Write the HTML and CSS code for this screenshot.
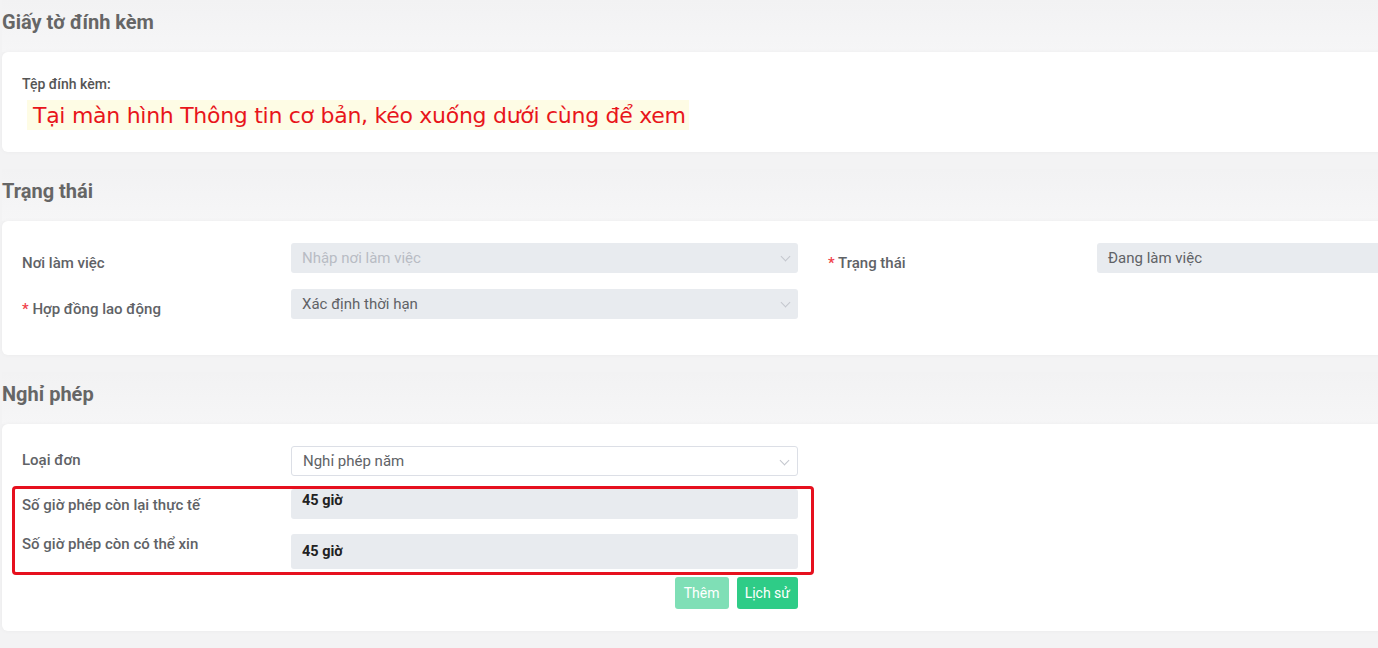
FILE: index.html
```html
<!DOCTYPE html>
<html lang="vi">
<head>
    <meta charset="UTF-8">
    <title>Hồ sơ nhân viên</title>
    <link rel="stylesheet" href="styles.css">
</head>
<body>
<div id="page">
    <h3 class="sec-title">Giấy tờ đính kèm</h3>
    <div class="card card-files">
        <div class="files-label">Tệp đính kèm:</div>
        <div class="note">Tại màn hình Thông tin cơ bản, kéo xuống dưới cùng để xem</div>
    </div>

    <h3 class="sec-title">Trạng thái</h3>
    <div class="card">
        <div class="cols">
            <div class="col">
                <div class="row">
                    <label class="lbl">Nơi làm việc</label>
                    <div class="inp disabled placeholder">Nhập nơi làm việc<span class="arrow"></span></div>
                </div>
                <div class="row">
                    <label class="lbl"><span class="req">*</span> Hợp đồng lao động</label>
                    <div class="inp disabled">Xác định thời hạn<span class="arrow"></span></div>
                </div>
            </div>
            <div class="col">
                <div class="row">
                    <label class="lbl"><span class="req">*</span> Trạng thái</label>
                    <div class="inp disabled">Đang làm việc</div>
                </div>
            </div>
        </div>
    </div>

    <h3 class="sec-title">Nghỉ phép</h3>
    <div class="card card-leave">
        <div class="cols">
            <div class="col">
                <div class="row">
                    <label class="lbl">Loại đơn</label>
                    <div class="inp select">Nghỉ phép năm<span class="arrow"></span></div>
                </div>
                <div class="mark">
                    <div class="row row-hours">
                        <label class="lbl">Số giờ phép còn lại thực tế</label>
                        <div class="inp disabled value top">45 giờ</div>
                    </div>
                    <div class="row row-hours2">
                        <label class="lbl">Số giờ phép còn có thể xin</label>
                        <div class="inp disabled value tall">45 giờ</div>
                    </div>
                </div>
                <div class="btns">
                    <button class="btn btn-light">Thêm</button>
                    <button class="btn">Lịch sử</button>
                </div>
            </div>
            <div class="col"></div>
        </div>
    </div>
</div>
</body>
</html>
```

FILE: styles.css
```css
* {
    margin: 0;
    padding: 0;
    box-sizing: border-box;
}

html, body {
    overflow: hidden;
}

body {
    background: #f3f3f4;
    font-family: Roboto, "Noto Sans", sans-serif;
    color: #606266;
    width: 1378px;
    height: 648px;
}

#page {
    width: 1640px;
    padding-left: 2px;
}

.sec-title {
    font-size: 20px;
    font-weight: bold;
    color: #666;
    height: 52px;
    padding-top: 10px;
    background: linear-gradient(#f2f2f3, #f6f6f7);
}

.card {
    background: #fff;
    border-radius: 6px;
    box-shadow: 0 0 5px rgba(0, 0, 0, 0.04);
    padding: 22px 20px 36px 20px;
    margin-bottom: 17px;
}

.card-files {
    height: 100px;
    padding-top: 24px;
}

.files-label {
    font-size: 14px;
    font-weight: 500;
    color: #555;
    height: 18px;
}

.note {
    display: inline-block;
    margin-top: 6px;
    margin-left: 5px;
    padding: 0 3px 0 6px;
    height: 30px;
    line-height: 31px;
    background: #fefce5;
    color: #e8151b;
    font-family: "DejaVu Sans", sans-serif;
    font-size: 22px;
    letter-spacing: -0.28px;
}

.cols {
    display: flex;
    gap: 30px;
}

.col {
    width: 776px;
}

.row {
    display: flex;
    align-items: center;
    margin-bottom: 16px;
}

.row:last-child {
    margin-bottom: 0;
}

.lbl {
    width: 269px;
    font-size: 15px;
    font-weight: 500;
    color: #606266;
    padding-top: 9px;
}

.req {
    color: #f0414a;
}

.inp {
    position: relative;
    width: 507px;
    height: 30px;
    line-height: 30px;
    padding-left: 11px;
    border-radius: 3px;
    font-size: 15px;
    color: #606266;
}

.disabled {
    background: #e8ebef;
}

.placeholder {
    color: #b8bcc4;
}

.select {
    background: #fff;
    border: 1px solid #dcdfe6;
    line-height: 28px;
}

.arrow {
    position: absolute;
    right: 9px;
    top: 10px;
    width: 7px;
    height: 7px;
    border-right: 1px solid #c4c7ce;
    border-bottom: 1px solid #c4c7ce;
    transform: rotate(45deg);
}

.card-leave {
    padding-top: 22px;
    padding-bottom: 22px;
}

.card-leave .row {
    margin-bottom: 10px;
}

.card-leave .row .lbl {
    padding-top: 0;
    margin-top: -3px;
}

.mark {
    border: 3px solid #e6101e;
    border-radius: 4px;
    margin: 0 -16px 0 -10px;
    padding: 0 13px 3px 7px;
}

.mark .row-hours {
    margin-bottom: 15px;
    align-items: flex-start;
}

.mark .row-hours .lbl {
    padding-top: 7px;
    margin-top: 0;
}

.mark .row-hours2 {
    margin-bottom: 0;
    align-items: flex-start;
}

.mark .row-hours2 .lbl {
    padding-top: 1px;
    margin-top: 0;
}

.value {
    font-weight: bold;
    font-size: 14.5px;
    color: #222;
}

.top {
    line-height: 24px;
}

.tall {
    height: 35px;
    line-height: 35px;
}

.btns {
    display: flex;
    justify-content: flex-end;
    gap: 8px;
    margin-top: 2px;
}

.btn {
    height: 32px;
    padding: 0 8px;
    border: 0;
    border-radius: 3px;
    background: #2ecc87;
    color: #fff;
    font-family: Roboto, sans-serif;
    font-size: 14px;
}

.btn-light {
    background: #7fdfb6;
    width: 54px;
}
```
